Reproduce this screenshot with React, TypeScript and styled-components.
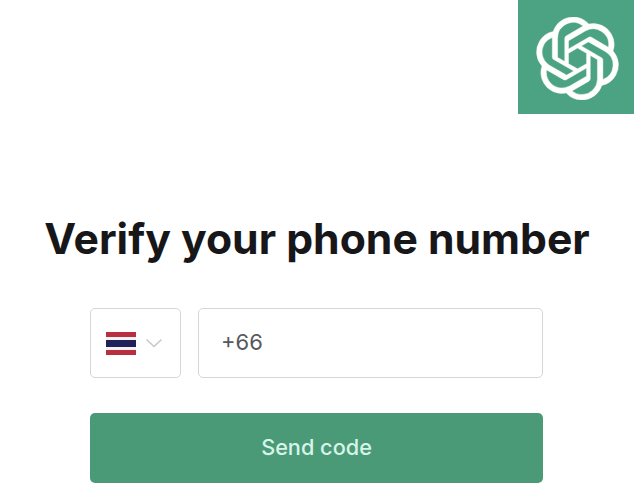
import React from "react";
import styled, { createGlobalStyle } from "styled-components";

const GlobalStyle = createGlobalStyle`
  html, body {
    margin: 0;
    padding: 0;
    background: #fff;
    font-family: Inter, "Liberation Sans", sans-serif;
  }
`;

function App() {
  return (
    <>
      <GlobalStyle />
      <Page>
        <LogoTile>
          <svg width="83" height="83" viewBox="0 0 24 24" fill="#fff" stroke="#fff" strokeWidth="0.12">
            <path d="M22.2819 9.8211a5.9847 5.9847 0 0 0-.5157-4.9108 6.0462 6.0462 0 0 0-6.5098-2.9A6.0651 6.0651 0 0 0 4.9807 4.1818a5.9847 5.9847 0 0 0-3.9977 2.9 6.0462 6.0462 0 0 0 .7427 7.0966 5.98 5.98 0 0 0 .511 4.9107 6.051 6.051 0 0 0 6.5146 2.9001A5.9847 5.9847 0 0 0 13.2599 24a6.0557 6.0557 0 0 0 5.7718-4.2058 5.9894 5.9894 0 0 0 3.9977-2.9001 6.0557 6.0557 0 0 0-.7475-7.0729zm-9.022 12.6081a4.4755 4.4755 0 0 1-2.8764-1.0408l.1419-.0804 4.7783-2.7582a.7948.7948 0 0 0 .3927-.6813v-6.7369l2.02 1.1686a.071.071 0 0 1 .038.052v5.5826a4.504 4.504 0 0 1-4.4945 4.4944zm-9.6607-4.1254a4.4708 4.4708 0 0 1-.5346-3.0137l.142.0852 4.783 2.7582a.7712.7712 0 0 0 .7806 0l5.8428-3.3685v2.3324a.0804.0804 0 0 1-.0332.0615L9.74 19.9502a4.4992 4.4992 0 0 1-6.1408-1.6464zM2.3408 7.8956a4.485 4.485 0 0 1 2.3655-1.9728V11.6a.7664.7664 0 0 0 .3879.6765l5.8144 3.3543-2.0201 1.1685a.0757.0757 0 0 1-.071 0l-4.8303-2.7865A4.504 4.504 0 0 1 2.3408 7.872zm16.5963 3.8558L13.1038 8.364 15.1192 7.2a.0757.0757 0 0 1 .071 0l4.8303 2.7913a4.4944 4.4944 0 0 1-.6765 8.1042v-5.6772a.79.79 0 0 0-.407-.667zm2.0107-3.0231l-.142-.0852-4.7735-2.7818a.7759.7759 0 0 0-.7854 0L9.409 9.2297V6.8974a.0662.0662 0 0 1 .0284-.0615l4.8303-2.7866a4.4992 4.4992 0 0 1 6.6802 4.66zM8.3065 12.863l-2.02-1.1638a.0804.0804 0 0 1-.038-.0567V6.0742a4.4992 4.4992 0 0 1 7.3757-3.4537l-.142.0805L8.704 5.459a.7948.7948 0 0 0-.3927.6813zm1.0976-2.3654l2.602-1.4998 2.6069 1.4998v2.9994l-2.5974 1.4997-2.6067-1.4997Z" />
          </svg>
        </LogoTile>
        <Title>Verify your phone number</Title>
        <Form>
          <PhoneRow>
            <CountrySelect>
              <Flag>
                <Stripe $color="#b8303f" $height={5} />
                <Stripe $color="#f4f1f1" $height={3} />
                <Stripe $color="#1f2158" $height={7} />
                <Stripe $color="#f4f1f1" $height={3} />
                <Stripe $color="#b8303f" $height={5} />
              </Flag>
              <svg width="18" height="10" viewBox="0 0 18 10" fill="none">
                <path d="M1.5 1.5L9 8.5L16.5 1.5" stroke="#c6c8cb" strokeWidth="1.5" />
              </svg>
            </CountrySelect>
            <PhoneField>+66</PhoneField>
          </PhoneRow>
          <SendButton>Send code</SendButton>
        </Form>
      </Page>
    </>
  );
}

export default App;

const Page = styled.div`
  position: relative;
  width: 634px;
  height: 492px;
  overflow: hidden;
  background: #fff;
  display: flex;
  flex-direction: column;
  align-items: center;
  padding-top: 211px;
  box-sizing: border-box;
`;

const LogoTile = styled.div`
  position: absolute;
  top: 0;
  right: 0;
  width: 116px;
  height: 114px;
  padding: 2px 0 0 3px;
  box-sizing: border-box;
  background: #4ba383;
  display: flex;
  align-items: center;
  justify-content: center;
`;

const Title = styled.h1`
  margin: 0 0 41px;
  font-size: 42.7px;
  line-height: 56px;
  font-weight: 700;
  color: #17171a;
  white-space: nowrap;
`;

const Form = styled.div`
  width: 453px;
  margin-right: 1px;
  display: flex;
  flex-direction: column;
  gap: 35px;
`;

const PhoneRow = styled.div`
  display: flex;
  gap: 17px;
`;

const CountrySelect = styled.div`
  width: 91px;
  height: 70px;
  box-sizing: border-box;
  border: 1.5px solid #d4d6d9;
  border-radius: 5px;
  display: flex;
  align-items: center;
  gap: 9px;
  padding-left: 15px;
`;

const Flag = styled.div`
  width: 30px;
  display: flex;
  flex-direction: column;
`;

const Stripe = styled.div<{ $color: string; $height: number }>`
  height: ${(p) => p.$height}px;
  background: ${(p) => p.$color};
`;

const PhoneField = styled.div`
  flex: 1;
  height: 70px;
  box-sizing: border-box;
  border: 1.5px solid #d4d6d9;
  border-radius: 5px;
  display: flex;
  align-items: center;
  padding: 0 0 2px 22px;
  font-size: 22px;
  color: #55585c;
`;

const SendButton = styled.div`
  height: 70px;
  padding-bottom: 3px;
  box-sizing: border-box;
  border-radius: 5px;
  background: #4a9a78;
  color: #d6f5e8;
  font-size: 21.7px;
  font-weight: 500;
  display: flex;
  align-items: center;
  justify-content: center;
`;
